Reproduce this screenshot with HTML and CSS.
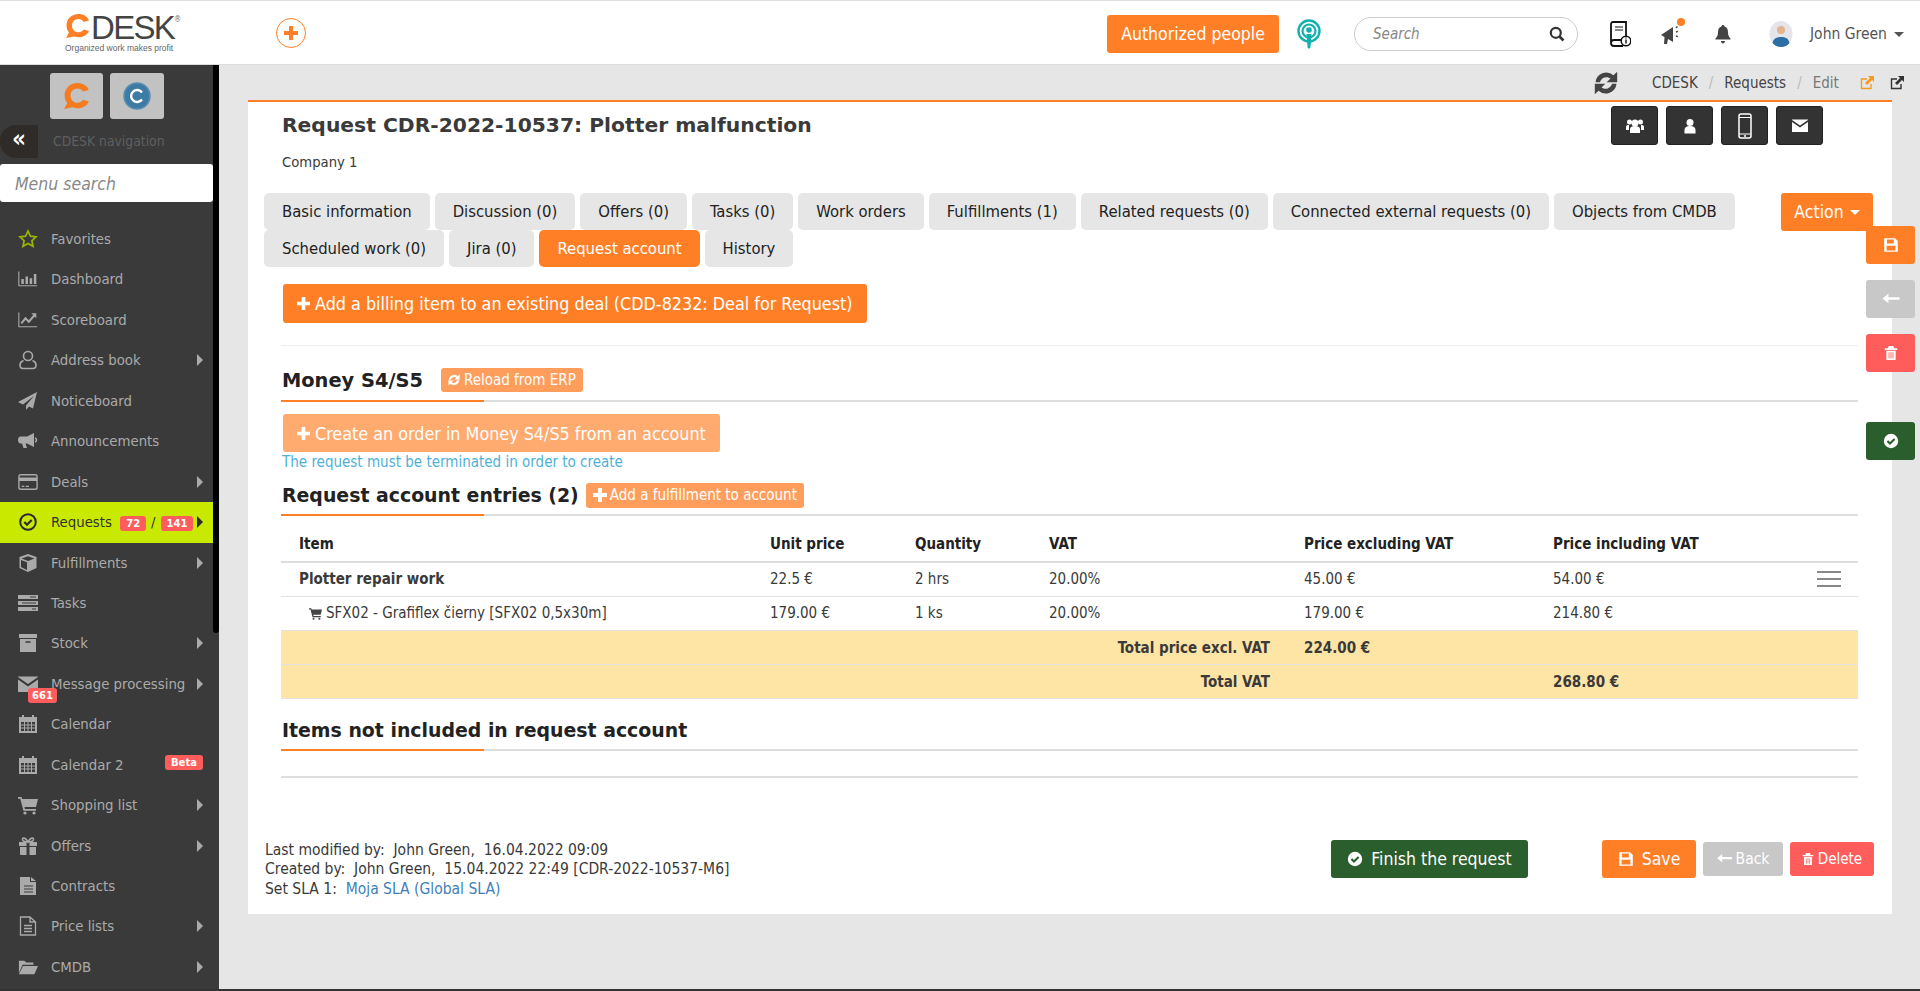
FILE: index.html
```html
<!DOCTYPE html>
<html lang="en">
<head>
    <meta charset="UTF-8" />
    <title>Request CDR-2022-10537</title>
    <link rel="stylesheet" href="styles.css">
</head>
<body>
    <svg class="sprite" xmlns="http://www.w3.org/2000/svg">
        <symbol id="i-star" viewBox="0 0 20 20"><path d="M10 2l2.400 5.200 5.600.7-4.100 3.800 1.100 5.600-5-2.800-5 2.800 1.100-5.600L2 7.900l5.600-.7z" fill="none" stroke="currentColor" stroke-width="1.700"/></symbol>
        <symbol id="i-bars" viewBox="0 0 24 20"><path d="M1 1v17h22" fill="none" stroke="currentColor" stroke-width="1.300"/><path d="M4 10h3v6H4zM9 7h3v9H9zM14 9h3v7h-3zM19 4h3v12h-3z" fill="currentColor"/></symbol>
        <symbol id="i-line" viewBox="0 0 24 20"><path d="M1 1v17h22" fill="none" stroke="currentColor" stroke-width="1.300"/><path d="M4 14l5-6 4 4 7-8" fill="none" stroke="currentColor" stroke-width="2.400"/><path d="M16 2h6v6z" fill="currentColor"/></symbol>
        <symbol id="i-user" viewBox="0 0 20 20"><circle cx="10" cy="6" r="4.500" fill="none" stroke="currentColor" stroke-width="1.600"/><path d="M5.500 10.500C3 11.500 2 13 2 15c0 2 1 3.500 3 3.500h10c2 0 3-1.500 3-3.500 0-2-1-3.500-3.500-4.500" fill="none" stroke="currentColor" stroke-width="1.600"/></symbol>
        <symbol id="i-plane" viewBox="0 0 20 20"><path d="M19 1L0 11l5 2.500L16 5 8 14.500V19l3-3.500 4 2z" fill="currentColor"/></symbol>
        <symbol id="i-horn" viewBox="0 0 20 20"><path d="M16 2v14L9 12.500H7.500L9 17H5.500L4 12.500H2.500C1 12.500 0 11 0 9s1-3.500 2.500-3.500H9z" fill="currentColor"/><path d="M17 7c2 .5 2 3.500 0 4" fill="none" stroke="currentColor" stroke-width="1.500"/></symbol>
        <symbol id="i-card" viewBox="0 0 22 18"><rect x="1" y="1" width="20" height="16" rx="2" fill="none" stroke="currentColor" stroke-width="1.500"/><path d="M1 4h20v4H1zM4 13h3v1.500H4zM8.500 13H12v1.500H8.500z" fill="currentColor"/></symbol>
        <symbol id="i-check-o" viewBox="0 0 20 20"><circle cx="10" cy="10" r="7.800" fill="none" stroke="currentColor" stroke-width="2"/><path d="M6.300 10l2.700 2.700 4.700-4.700" fill="none" stroke="currentColor" stroke-width="2.200"/></symbol>
        <symbol id="i-cube" viewBox="0 0 20 20"><path d="M10 1l8.500 3v11L10 19l-8.500-4V4zM3.500 5.500L10 8l6.500-2.500L10 3.300zM3 7v7l6 3V9.200z" fill="currentColor" fill-rule="evenodd"/></symbol>
        <symbol id="i-tasks" viewBox="0 0 20 20"><path d="M0 2h20v4H0zM0 8h20v4H0zM0 14h20v4H0z" fill="currentColor"/><path d="M12 4h6M4 10h14M14 16h4" stroke="#3a3a3a" stroke-width="1"/></symbol>
        <symbol id="i-box" viewBox="0 0 20 20"><path d="M1 1h18v4H1zM2 6h16v13H2z" fill="currentColor"/><path d="M7.500 9h5" stroke="#3a3a3a" stroke-width="1.500"/></symbol>
        <symbol id="i-mail" viewBox="0 0 20 16"><path d="M0 1l10 7 10-7v-.5H0zM0 3.500V16h20V3.500L10 10.500z" fill="currentColor"/></symbol>
        <symbol id="i-cal" viewBox="0 0 20 20"><path d="M1 3h3V1h2v2h8V1h2v2h3v16H1zM3 8v9h14V8z" fill="currentColor" fill-rule="evenodd"/><path d="M6.500 8v9M10 8v9M13.500 8v9M3 11h14M3 14h14" stroke="currentColor" stroke-width="1"/></symbol>
        <symbol id="i-cart" viewBox="0 0 20 20"><path d="M0 2h3.500l.6 2H20l-2 8H6.500l.4 2H18v1.800H5.400L2.300 3.800H0z" fill="currentColor"/><circle cx="7" cy="18" r="1.600" fill="currentColor"/><circle cx="16" cy="18" r="1.600" fill="currentColor"/></symbol>
        <symbol id="i-gift" viewBox="0 0 20 20"><path d="M1 6h7.500v4H1zM11.500 6H19v4h-7.500zM2 11h6.500v8H3a1 1 0 0 1-1-1zM11.500 11H18v7a1 1 0 0 1-1 1h-5.500z" fill="currentColor"/><path d="M10 6C8 2 5 1 4.500 3S7 6 10 6c3 0 6-1 5.500-3S12 2 10 6z" fill="none" stroke="currentColor" stroke-width="1.600"/></symbol>
        <symbol id="i-file" viewBox="0 0 18 20"><path d="M1 1h10v5h6v13H1zM12 1l5 4h-5z" fill="currentColor"/><path d="M5 10h9M5 13h9M5 16h9" stroke="#3a3a3a" stroke-width="1.100"/></symbol>
        <symbol id="i-file-o" viewBox="0 0 18 20"><path d="M1.500 1H11l5.500 5v13h-15zM11 1v5h5.500" fill="none" stroke="currentColor" stroke-width="1.300"/><path d="M5 9.500h8M5 12.500h8M5 15.500h8" stroke="currentColor" stroke-width="1.300"/></symbol>
        <symbol id="i-folder" viewBox="0 0 22 20"><path d="M1 17V3h6l2 2h8v2.500H5z" fill="currentColor"/><path d="M5.500 9H22l-4 9H1z" fill="currentColor"/></symbol>
        <symbol id="i-check" viewBox="0 0 20 20"><circle cx="10" cy="10" r="9" fill="currentColor"/><path d="M5.500 10l3.200 3.200 5.800-5.800" fill="none" stroke="#2a5e2c" stroke-width="2.600"/></symbol>
        <symbol id="i-save" viewBox="0 0 20 20"><path d="M1.500 1.500h13.500l3.500 3.500v13.500h-17zM5 3.200V8h8.500V3.200zM4.500 11v5.800h11V11z" fill="currentColor" fill-rule="evenodd"/></symbol>
        <symbol id="i-trash" viewBox="0 0 18 20"><path d="M1 4h16v2H1zM6 1h6l1 3H5zM3 7h12v12H3z" fill="currentColor"/><path d="M6.500 9v8M9 9v8M11.500 9v8" stroke="#ff5c5c" stroke-width="1.100"/></symbol>
        <symbol id="i-back" viewBox="0 0 20 14"><path d="M7 1v4h13v3H7v4L0 6.500z" fill="currentColor"/></symbol>
        <symbol id="i-plus" viewBox="0 0 14 14"><path d="M5 0h4v5h5v4H9v5H5V9H0V5h5z" fill="currentColor"/></symbol>
        <symbol id="i-reload" viewBox="0 0 20 20"><path d="M2.500 9.500a7.700 7.700 0 0 1 12.800-5L18 2v7.500h-7.500l2.700-2.700A4.800 4.800 0 0 0 5.700 9.500zM17.500 10.500a7.700 7.700 0 0 1-12.800 5L2 18v-7.500h7.500l-2.700 2.700a4.800 4.800 0 0 0 7.500-2.700z" fill="currentColor"/></symbol>
        <symbol id="i-out" viewBox="0 0 14 14"><path d="M11 8v4.500H1.500V3H7" fill="none" stroke="currentColor" stroke-width="1.400"/><path d="M8 0h6v6l-2-2-5 5-2-2 5-5z" fill="currentColor"/></symbol>
        <symbol id="i-cdesk" viewBox="0 0 26 26"><path d="M24 7.500C22 3 18 1 13.500 1 6.500 1 1.500 6 1.500 12.500c0 2.800 1 5.300 2.500 7L1 25l8-1.500c1.500.5 3 .8 4.500.8 4.700 0 8.700-2.300 10.500-6.300l-5.500-1.500c-1 1.700-3 2.800-5 2.800-4 0-6.500-3-6.500-6.800 0-3.700 2.700-6.500 6.500-6.500 2.100 0 4 1 5 2.900z" fill="currentColor"/></symbol>
    </svg>

    <header class="topbar">
        <div class="logo">
            <div class="logo-main">
                <svg class="logo-c"><use href="#i-cdesk"/></svg>
                <span class="logo-word">DESK</span><span class="logo-reg">®</span>
            </div>
            <div class="logo-tag">Organized work makes profit</div>
        </div>
        <span class="add-round"><svg width="14" height="14"><use href="#i-plus"/></svg></span>

        <div class="topbar-right">
            <a class="btn btn-orange btn-auth">Authorized people</a>
            <svg class="podcast" viewBox="0 0 24 30"><circle cx="12" cy="12" r="10.500" fill="none" stroke="#12b0b0" stroke-width="2.400"/><circle cx="12" cy="12" r="6.500" fill="none" stroke="#12b0b0" stroke-width="2.200"/><circle cx="12" cy="11" r="2.800" fill="#12b0b0"/><path d="M9.500 15h5l-1 13c-.3 2-2.700 2-3 0z" fill="#12b0b0"/></svg>
            <div class="top-search">
                <span>Search</span>
                <svg width="16" height="16" viewBox="0 0 16 16"><circle cx="6.800" cy="6.800" r="5" fill="none" stroke="#333" stroke-width="2.200"/><path d="M10.500 10.500l4 4" stroke="#333" stroke-width="2.600"/></svg>
            </div>
            <svg class="top-book" viewBox="0 0 24 26"><path d="M4 22V3a2 2 0 0 1 2-2h13v15M4 22c0-2 1-3 3-3h8M4 22c0 2 1 3 3 3h9" fill="none" stroke="#111" stroke-width="1.800"/><path d="M8 6h8M8 9h8" stroke="#111" stroke-width="1.200"/><circle cx="19" cy="20" r="4.800" fill="#fff" stroke="#111" stroke-width="1.500"/><path d="M19 18.500v4M19 16.500v1" stroke="#111" stroke-width="1.400"/></svg>
            <span class="top-horn">
                <svg width="24" height="22" viewBox="0 0 24 22"><path d="M1 12l12-8v15l-5-3-1 5H4l.5-7z" fill="#444"/><path d="M16 9l3-1M16 13l3 1M16 5l2-2" stroke="#444" stroke-width="1.500" stroke-dasharray="2 1"/></svg>
                <i class="horn-dot"></i>
            </span>
            <svg class="top-bell" viewBox="0 0 16 20"><path d="M8 1c1 0 1.500.6 1.500 1.500C12 3.200 13 5.500 13 8c0 3.500 1 5 2.500 6.500v1H.5v-1C2 13 3 11.500 3 8c0-2.500 1-4.800 3.500-5.500C6.500 1.600 7 1 8 1zM6 17h4c0 1.500-1 2.500-2 2.500S6 18.500 6 17z" fill="#444"/></svg>
            <svg class="top-avatar" viewBox="0 0 24 26"><ellipse cx="12" cy="13" rx="11.500" ry="13" fill="#e4e4ea"/><circle cx="12" cy="9" r="4" fill="#e3b48e"/><path d="M3.500 22c1-4.500 4-6 8.500-6s7.500 1.500 8.500 6c-2 2.500-5 4-8.500 4s-6.500-1.500-8.500-4z" fill="#2e6ea6"/></svg>
            <span class="top-user">John Green</span>
            <i class="caret caret-dark"></i>
        </div>
    </header>

    <div class="layout">
        <aside class="sidebar">
            <i class="side-scroll"></i>
            <div class="side-apps">
                <span class="app-tile">
                    <svg class="tile-c"><use href="#i-cdesk"/></svg>
                </span>
                <span class="app-tile app-tile-wide">
                    <svg width="28" height="28" viewBox="0 0 28 28"><circle cx="14" cy="14" r="13" fill="#3d7ba5" stroke="#5a8eb0" stroke-width="1.500"/><path d="M19 10.500a6 6 0 1 0 0 7" fill="none" stroke="#fff" stroke-width="2.400"/></svg>
                </span>
            </div>
            <div class="side-title">
                <span class="side-toggle">«</span>
                <span class="side-name">CDESK navigation</span>
            </div>
            <div class="side-search">Menu search</div>

            <ul class="menu">
                <li class="menu-item"><svg class="mi mi-star"><use href="#i-star"/></svg>Favorites</li>
                <li class="menu-item"><svg class="mi"><use href="#i-bars"/></svg>Dashboard</li>
                <li class="menu-item"><svg class="mi"><use href="#i-line"/></svg>Scoreboard</li>
                <li class="menu-item has-sub"><svg class="mi"><use href="#i-user"/></svg>Address book</li>
                <li class="menu-item"><svg class="mi"><use href="#i-plane"/></svg>Noticeboard</li>
                <li class="menu-item"><svg class="mi"><use href="#i-horn"/></svg>Announcements</li>
                <li class="menu-item has-sub"><svg class="mi"><use href="#i-card"/></svg>Deals</li>
                <li class="menu-item has-sub active"><svg class="mi"><use href="#i-check-o"/></svg>Requests
                    <span class="count count-first">72</span><span class="count-sep">/</span><span class="count">141</span></li>
                <li class="menu-item has-sub"><svg class="mi"><use href="#i-cube"/></svg>Fulfillments</li>
                <li class="menu-item"><svg class="mi"><use href="#i-tasks"/></svg>Tasks</li>
                <li class="menu-item has-sub"><svg class="mi"><use href="#i-box"/></svg>Stock</li>
                <li class="menu-item has-sub"><svg class="mi"><use href="#i-mail"/></svg>Message processing<span class="count count-mail">661</span></li>
                <li class="menu-item"><svg class="mi"><use href="#i-cal"/></svg>Calendar</li>
                <li class="menu-item"><svg class="mi"><use href="#i-cal"/></svg>Calendar 2<span class="count count-beta">Beta</span></li>
                <li class="menu-item has-sub"><svg class="mi"><use href="#i-cart"/></svg>Shopping list</li>
                <li class="menu-item has-sub"><svg class="mi"><use href="#i-gift"/></svg>Offers</li>
                <li class="menu-item"><svg class="mi"><use href="#i-file"/></svg>Contracts</li>
                <li class="menu-item has-sub"><svg class="mi"><use href="#i-file-o"/></svg>Price lists</li>
                <li class="menu-item has-sub"><svg class="mi"><use href="#i-folder"/></svg>CMDB</li>
            </ul>
        </aside>

        <main class="main">
            <div class="crumbs">
                <svg class="crumb-reload"><use href="#i-reload"/></svg>
                <span class="crumb">CDESK</span><span class="crumb-sep">/</span>
                <span class="crumb">Requests</span><span class="crumb-sep">/</span>
                <span class="crumb crumb-last">Edit</span>
                <svg class="crumb-out crumb-out-orange"><use href="#i-out"/></svg>
                <svg class="crumb-out"><use href="#i-out"/></svg>
            </div>

            <section class="panel">
                <div class="req-head">
                    <div>
                        <h1>Request CDR-2022-10537: Plotter malfunction</h1>
                        <div class="company">Company 1</div>
                    </div>
                    <div class="contact-btns">
                        <span class="contact-btn"><svg width="18" height="16" viewBox="0 0 18 16"><circle cx="9" cy="5" r="3.500" fill="#fff"/><circle cx="3.500" cy="4" r="2.500" fill="#fff"/><circle cx="14.500" cy="4" r="2.500" fill="#fff"/><path d="M4 15v-4c0-2 2-3 5-3s5 1 5 3v4zM0 12V9c0-1.500 1-2 3-2v5zM18 12V9c0-1.500-1-2-3-2v5z" fill="#fff"/></svg></span>
                        <span class="contact-btn"><svg width="14" height="16" viewBox="0 0 14 16"><circle cx="7" cy="4.500" r="3.500" fill="#fff"/><path d="M1.500 15.500v-3.500c0-2.500 2-4 5.500-4s5.500 1.500 5.500 4v3.500z" fill="#fff"/></svg></span>
                        <span class="contact-btn"><svg width="14" height="26" viewBox="0 0 14 26"><rect x="1" y="1" width="12" height="24" rx="2" fill="none" stroke="#fff" stroke-width="1.500"/><path d="M1 4.500h12M1 21h12" stroke="#fff" stroke-width="1"/><circle cx="7" cy="23" r="1" fill="#fff"/></svg></span>
                        <span class="contact-btn"><svg width="16" height="13"><use href="#i-mail"/></svg></span>
                    </div>
                </div>

                <div class="tabs-row">
                    <ul class="tabs">
                        <li class="tab">Basic information</li>
                        <li class="tab">Discussion (0)</li>
                        <li class="tab">Offers (0)</li>
                        <li class="tab">Tasks (0)</li>
                        <li class="tab">Work orders</li>
                        <li class="tab">Fulfillments (1)</li>
                        <li class="tab">Related requests (0)</li>
                        <li class="tab">Connected external requests (0)</li>
                        <li class="tab">Objects from CMDB</li>
                        <li class="tab">Scheduled work (0)</li>
                        <li class="tab">Jira (0)</li>
                        <li class="tab tab-active">Request account</li>
                        <li class="tab">History</li>
                    </ul>
                    <a class="btn btn-orange btn-action">Action <i class="caret"></i></a>
                </div>

                <a class="btn btn-orange btn-wide"><svg class="ico-plus"><use href="#i-plus"/></svg>Add a billing item to an existing deal (CDD-8232: Deal for Request)</a>
                <div class="rule rule-first"></div>

                <div class="sec-head sec-money">
                    <h2>Money S4/S5</h2>
                    <a class="btn-small btn-reload"><svg class="ico-small"><use href="#i-reload"/></svg>Reload from ERP</a>
                </div>
                <a class="btn btn-faded btn-wide btn-create"><svg class="ico-plus"><use href="#i-plus"/></svg>Create an order in Money S4/S5 from an account</a>
                <div class="hint">The request must be terminated in order to create</div>

                <div class="sec-head sec-entries">
                    <h2>Request account entries (2)</h2>
                    <a class="btn-small btn-fulfil"><svg class="ico-small"><use href="#i-plus"/></svg>Add a fulfillment to account</a>
                </div>

                <table class="entries">
                    <colgroup>
                        <col class="c-item"><col class="c-unit"><col class="c-qty"><col class="c-vat"><col class="c-excl"><col class="c-incl">
                    </colgroup>
                    <thead>
                        <tr>
                            <th>Item</th><th>Unit price</th><th>Quantity</th><th>VAT</th><th>Price excluding VAT</th><th>Price including VAT</th>
                        </tr>
                    </thead>
                    <tbody>
                        <tr>
                            <td class="strong">Plotter repair work</td><td>22.5 €</td><td>2 hrs</td><td>20.00%</td><td>45.00 €</td>
                            <td class="cell-menu">54.00 €<span class="burger"><i></i><i></i><i></i></span></td>
                        </tr>
                        <tr>
                            <td class="sub-item"><svg class="ico-cart"><use href="#i-cart"/></svg>SFX02 - Grafiflex čierny [SFX02 0,5x30m]</td><td>179.00 €</td><td>1 ks</td><td>20.00%</td><td>179.00 €</td><td>214.80 €</td>
                        </tr>
                        <tr class="total">
                            <td colspan="4" class="total-label">Total price excl. VAT</td><td>224.00 €</td><td></td>
                        </tr>
                        <tr class="total">
                            <td colspan="4" class="total-label">Total VAT</td><td></td><td>268.80 €</td>
                        </tr>
                    </tbody>
                </table>

                <div class="sec-head sec-items">
                    <h2>Items not included in request account</h2>
                </div>
                <div class="rule rule-last"></div>

                <div class="foot">
                    <div class="foot-info">
                        <div>Last modified by:&nbsp; John Green,&nbsp; 16.04.2022 09:09</div>
                        <div>Created by:&nbsp; John Green,&nbsp; 15.04.2022 22:49 [CDR-2022-10537-M6]</div>
                        <div>Set SLA 1:&nbsp; <a class="link">Moja SLA (Global SLA)</a></div>
                    </div>
                    <a class="btn btn-green btn-finish"><svg class="ico-btn"><use href="#i-check"/></svg>Finish the request</a>
                    <a class="btn btn-orange btn-save"><svg class="ico-btn"><use href="#i-save"/></svg>Save</a>
                    <a class="btn btn-grey btn-back"><svg class="ico-back"><use href="#i-back"/></svg>Back</a>
                    <a class="btn btn-red btn-delete"><svg class="ico-trash"><use href="#i-trash"/></svg>Delete</a>
                </div>

                <div class="side-actions">
                    <a class="side-act btn-orange"><svg width="16" height="16"><use href="#i-save"/></svg></a>
                    <a class="side-act btn-grey"><svg width="18" height="12"><use href="#i-back"/></svg></a>
                    <a class="side-act btn-red"><svg width="14" height="16"><use href="#i-trash"/></svg></a>
                    <a class="side-act btn-green side-act-last"><svg width="16" height="16"><use href="#i-check"/></svg></a>
                </div>
            </section>
        </main>
    </div>
    <div class="page-end"></div>
</body>
</html>
```

FILE: styles.css
```css
* {
    box-sizing: border-box;
}

html, body {
    margin: 0;
    height: 991px;
    overflow: hidden;
}

body {
    font-family: "DejaVu Sans Condensed", "DejaVu Sans", sans-serif;
    font-stretch: condensed;
    font-size: 15px;
    color: #3a3a3a;
    background: #e6e6e6;
}

.sprite {
    display: none;
}

ul {
    list-style: none;
    margin: 0;
    padding: 0;
}

/* top bar */
.topbar {
    height: 65px;
    background: #fff;
    border-top: 1px solid #e0e0e0;
    border-bottom: 1px solid #ddd;
    display: flex;
    align-items: center;
}

.logo {
    width: 276px;
    padding-left: 65px;
    flex: none;
}

.logo-main {
    display: flex;
    align-items: flex-start;
    height: 27px;
}

.logo-c {
    width: 26px;
    height: 26px;
    color: #ff7f27;
}

.logo-word {
    font-family: "Liberation Sans", sans-serif;
    font-stretch: normal;
    font-size: 33px;
    line-height: 29px;
    color: #444;
    letter-spacing: -1.7px;
}

.logo-reg {
    font-size: 8px;
    color: #777;
    margin-top: 2px;
}

.logo-tag {
    font-family: "Liberation Sans", sans-serif;
    font-stretch: normal;
    font-size: 8.5px;
    color: #666;
    margin-top: 3px;
    white-space: nowrap;
}

.add-round {
    width: 30px;
    height: 30px;
    border: 1px solid #ff7f27;
    border-radius: 50%;
    color: #ff7f27;
    display: flex;
    align-items: center;
    justify-content: center;
}

.topbar-right {
    margin: 3px 0 0 801px;
    display: flex;
    align-items: center;
}

.btn {
    display: inline-flex;
    align-items: center;
    justify-content: center;
    color: #fff;
    border-radius: 3px;
    font-size: 17.5px;
    white-space: nowrap;
}

.btn-orange {
    background: #ff7f27;
}

.btn-faded {
    background: #ffab70;
}

.btn-green {
    background: #2a5e2c;
}

.btn-grey {
    background: #c8c8c8;
}

.btn-red {
    background: #ff5c5c;
}

.btn-auth {
    width: 172px;
    height: 38px;
}

.podcast {
    width: 24px;
    height: 30px;
    margin-left: 18px;
}

.top-search {
    width: 224px;
    height: 34px;
    margin-left: 33px;
    border: 1px solid #ccc;
    border-radius: 17px;
    padding: 0 12px 0 18px;
    display: flex;
    align-items: center;
    justify-content: space-between;
    font-style: italic;
    color: #888;
}

.top-book {
    width: 24px;
    height: 26px;
    margin-left: 29px;
}

.top-horn {
    position: relative;
    margin-left: 29px;
    display: flex;
}

.horn-dot {
    position: absolute;
    top: -5px;
    right: -1px;
    width: 8px;
    height: 8px;
    border-radius: 50%;
    background: #ff7f27;
}

.top-bell {
    width: 16px;
    height: 20px;
    margin-left: 31px;
}

.top-avatar {
    width: 24px;
    height: 26px;
    margin-left: 38px;
}

.top-user {
    margin-left: 17px;
    font-size: 15.5px;
    color: #555;
}

.caret {
    display: inline-block;
    width: 0;
    height: 0;
    border-left: 5px solid transparent;
    border-right: 5px solid transparent;
    border-top: 5px solid #fff;
    margin-left: 2px;
}

.caret-dark {
    border-top-color: #555;
    margin-left: 7px;
}

/* layout */
.layout {
    display: flex;
    height: 924px;
}

.sidebar {
    position: relative;
    width: 219px;
    flex: none;
    background: #3a3a3a;
    overflow: hidden;
}

.side-scroll {
    position: absolute;
    top: 0;
    right: 0;
    width: 6px;
    height: 568px;
    background: #000;
    border-radius: 0 0 3px 3px;
}

.side-apps {
    display: flex;
    gap: 7px;
    padding: 8px 0 0 50px;
}

.app-tile {
    width: 53px;
    height: 46px;
    background: #c2c2c2;
    border-radius: 3px;
    display: flex;
    align-items: center;
    justify-content: center;
}

.app-tile-wide {
    width: 54px;
}

.tile-c {
    width: 28px;
    height: 28px;
    color: #f47b20;
}

.side-title {
    display: flex;
    align-items: center;
    height: 33px;
    margin-top: 6px;
}

.side-toggle {
    width: 38px;
    height: 33px;
    background: #2e2b28;
    border-radius: 16px 0 0 16px;
    color: #fff;
    font-size: 24px;
    font-weight: bold;
    line-height: 28px;
    text-align: center;
}

.side-name {
    margin: 0 0 2px 15px;
    font-size: 13.8px;
    color: #5f5f5f;
}

.side-search {
    width: 213px;
    height: 38px;
    margin-top: 6px;
    background: #fff;
    border-radius: 3px;
    padding-left: 15px;
    font-size: 17.5px;
    line-height: 40px;
    font-style: italic;
    color: #888;
}

.menu {
    width: 213px;
    margin-top: 17px;
}

.menu-item {
    position: relative;
    height: 40.45px;
    padding-left: 51px;
    line-height: 40px;
    font-size: 14.8px;
    color: #aaa;
    white-space: nowrap;
}

.mi {
    position: absolute;
    left: 18px;
    top: 10px;
    width: 20px;
    height: 20px;
    color: #aaa;
}

.mi-star {
    color: #9db500;
}

.has-sub::after {
    content: "";
    position: absolute;
    right: 10px;
    top: 14px;
    border-left: 6px solid #aaa;
    border-top: 6px solid transparent;
    border-bottom: 6px solid transparent;
}

.menu-item.active {
    background: #c9ea00;
    color: #333;
}

.menu-item.active .mi {
    color: #2b2b2b;
}

.menu-item.active::after {
    border-left-color: #2b2b2b;
}

.count {
    display: inline-block;
    background: #ff5c5c;
    color: #fff;
    border-radius: 3px;
    font-family: "DejaVu Sans", sans-serif;
    font-stretch: normal;
    font-size: 10px;
    font-weight: bold;
    line-height: 15px;
    height: 15px;
    padding: 0 6px;
}

.count-first {
    margin-left: 4px;
}

.count-sep {
    margin: 0 5px;
}

.count-mail {
    position: absolute;
    left: 28px;
    top: 24px;
    padding: 0 4px;
}

.count-beta {
    position: absolute;
    left: 165px;
    top: 10px;
}

/* main */
.main {
    flex: 1;
    min-width: 0;
}

.crumbs {
    height: 35px;
    display: flex;
    align-items: center;
    padding-left: 1373px;
    color: #444;
}

.crumb-reload {
    width: 28px;
    height: 28px;
    color: #444;
    margin-right: 32px;
}

.crumb-sep {
    color: #bbb;
    margin: 0 11px;
}

.crumb-last {
    color: #777;
}

.crumb-out {
    width: 14px;
    height: 14px;
    margin-left: 16px;
    color: #333;
}

.crumb-out-orange {
    margin-left: 21px;
    color: #f39a22;
}

.panel {
    position: relative;
    width: 1644px;
    height: 814px;
    margin-left: 29px;
    background: #fff;
    border-top: 2px solid #ff7f27;
    padding: 0 34px 0 33px;
}

.req-head {
    display: flex;
    justify-content: space-between;
    height: 91px;
}

h1 {
    margin: 10px 0 0 1px;
    font-family: "DejaVu Sans", sans-serif;
    font-stretch: normal;
    font-size: 20.3px;
    line-height: 26px;
    font-weight: bold;
    color: #3a3a3a;
}

.company {
    margin: 14px 0 0 1px;
    font-size: 14.7px;
    line-height: 20px;
}

.contact-btns {
    display: flex;
    gap: 8px;
    margin: 4px 35px 0 0;
}

.contact-btn {
    width: 47px;
    height: 39px;
    background: #333;
    border-radius: 3px;
    border: 1px solid #222;
    color: #fff;
    display: flex;
    align-items: center;
    justify-content: center;
}

.tabs-row {
    display: flex;
    justify-content: space-between;
    align-items: flex-start;
    height: 74px;
    margin: 0 -15px 0 -17px;
}

.tabs {
    display: flex;
    flex-wrap: wrap;
    gap: 0 5px;
    width: 1490px;
}

.tab {
    height: 37px;
    line-height: 37px;
    padding: 0 18px;
    background: #e6e6e6;
    border-radius: 5px;
    color: #222;
    font-size: 16.5px;
    white-space: nowrap;
}

.tab-active {
    background: #ff7f27;
    color: #fff;
}

.btn-action {
    width: 92px;
    height: 38px;
    gap: 4px;
}

.btn-wide {
    display: flex;
    width: fit-content;
    height: 39px;
    padding: 0 14px;
    margin: 17px 0 0 2px;
    font-size: 17.8px;
}

.ico-plus {
    width: 13px;
    height: 13px;
    margin-right: 5px;
}

.rule {
    height: 1px;
    background: #eee;
}

.rule-first {
    margin-top: 22px;
}

.sec-head {
    position: relative;
    display: flex;
    align-items: center;
    border-bottom: 2px solid #ddd;
}

.sec-head::after {
    content: "";
    position: absolute;
    left: 0;
    bottom: -2px;
    width: 203px;
    height: 2px;
    background: #ff7f27;
}

h2 {
    margin: 0 0 0 1px;
    font-family: "DejaVu Sans", sans-serif;
    font-stretch: normal;
    font-size: 18.9px;
    font-weight: bold;
    color: #222;
}

.btn-small {
    display: inline-flex;
    align-items: center;
    height: 24px;
    background: #ff9d5c;
    color: #fff;
    border-radius: 3px;
    white-space: nowrap;
}

.ico-small {
    width: 14px;
    height: 14px;
    margin-right: 3px;
}

.sec-money {
    height: 56px;
    padding-top: 14px;
}

.sec-money h2 {
    font-size: 19.4px;
}

.btn-reload {
    margin-left: 18px;
    padding: 0 7px 0 6px;
}

.btn-create {
    height: 38px;
    margin-top: 12px;
}

.hint {
    margin-left: 1px;
    height: 24px;
    line-height: 20px;
    color: #4fb0d8;
}

.sec-entries {
    height: 40px;
}

.btn-fulfil {
    height: 25px;
    margin-left: 7px;
    padding: 0 7px;
}

.entries {
    width: 1577px;
    table-layout: fixed;
    border-collapse: collapse;
}

.c-item { width: 471px; }
.c-unit { width: 145px; }
.c-qty { width: 134px; }
.c-vat { width: 255px; }
.c-excl { width: 249px; }
.c-incl { width: 323px; }

.entries th,
.entries td {
    padding: 0 0 0 18px;
    text-align: left;
}

.entries th {
    height: 46px;
    padding-top: 11px;
    color: #222;
    border-bottom: 2px solid #ddd;
    font-weight: bold;
}

.entries td {
    height: 34px;
    border-bottom: 1px solid #e2e2e2;
}

.entries .strong {
    font-weight: bold;
}

.entries .sub-item {
    padding-left: 28px;
}

.ico-cart {
    width: 13px;
    height: 13px;
    margin-right: 4px;
    vertical-align: -2px;
    color: #444;
}

.cell-menu {
    position: relative;
}

.burger {
    position: absolute;
    right: 17px;
    top: 8px;
    width: 24px;
}

.burger i {
    display: block;
    height: 2px;
    background: #888;
    margin-bottom: 5px;
}

.total td {
    background: #fee5a5;
    font-weight: bold;
    padding-top: 2px;
}

.entries .total-label {
    text-align: right;
    padding-right: 16px;
}

.sec-items {
    height: 52px;
    padding-top: 12px;
}

.rule-last {
    height: 2px;
    background: #ddd;
    margin-top: 25px;
}

.foot {
    display: flex;
    align-items: center;
    margin: 62px -16px 0 -16px;
    height: 38px;
}

.foot-info {
    width: 1066px;
    font-size: 15.5px;
    line-height: 19.5px;
    margin-top: 23px;
}

.link {
    color: #3f7fb8;
}

.btn-finish {
    width: 197px;
    height: 38px;
}

.btn-save {
    width: 94px;
    height: 38px;
    margin-left: auto;
}

.btn-back {
    width: 80px;
    height: 34px;
    margin-left: 7px;
    font-size: 15.5px;
}

.btn-delete {
    width: 84px;
    height: 34px;
    margin-left: 7px;
    font-size: 15px;
}

.ico-btn {
    width: 16px;
    height: 16px;
    margin-right: 8px;
}

.ico-back {
    width: 15px;
    height: 11px;
    margin-right: 4px;
}

.ico-trash {
    width: 12px;
    height: 14px;
    margin-right: 4px;
}

/* floating buttons on the right edge */
.side-actions {
    position: absolute;
    left: 1618px;
    top: 124px;
    display: flex;
    flex-direction: column;
    gap: 16px;
}

.side-act {
    width: 49px;
    height: 38px;
    border-radius: 3px;
    color: #fff;
    display: flex;
    align-items: center;
    justify-content: center;
}

.side-act-last {
    margin-top: 34px;
}

.page-end {
    height: 2px;
    background: #333;
}
```
